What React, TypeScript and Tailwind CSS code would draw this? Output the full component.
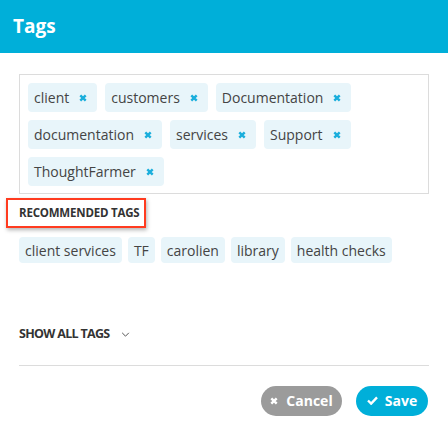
import React from "react";

const font = { fontFamily: '"Open Sans", "Noto Sans", sans-serif' };

function XIcon({ className }: { className?: string }) {
  return (
    <svg viewBox="0 0 8 8" className={className} width="8" height="8">
      <path d="M1.3 1.3 L6.7 6.7 M6.7 1.3 L1.3 6.7" stroke="currentColor" strokeWidth="2.4" strokeLinecap="butt" />
    </svg>
  );
}

function Chip({ label }: { label: string }) {
  return (
    <div className="flex h-[29px] items-center rounded-[4px] bg-[#e8f5fa] pl-[6px] pr-[10px] text-[14px] text-[#444]">
      <span>{label}</span>
      <XIcon className="ml-[10px] text-[#1aaedc]" />
    </div>
  );
}

function RecChip({ label }: { label: string }) {
  return (
    <div className="flex h-[26px] items-center rounded-[4px] bg-[#e8f5fa] px-[6px] text-[14px] text-[#444]">
      {label}
    </div>
  );
}

export default function App() {
  const tags = ["client", "customers", "Documentation", "documentation", "services", "Support", "ThoughtFarmer"];
  const rec = ["client services", "TF", "carolien", "library", "health checks"];
  return (
    <div className="h-[433px] w-[448px] bg-white" style={font}>
      <div className="flex h-[53px] items-center bg-[#00afd9] px-[13px]">
        <span className="text-[19px] font-bold text-white">Tags</span>
      </div>
      <div className="mx-[19px] mt-[21px] flex flex-wrap gap-[8px] border border-[#dcdcdc] px-[8px] pb-[7px] pt-[8px]">
        {tags.map((t) => (
          <Chip key={t} label={t} />
        ))}
      </div>
      <div className="ml-[6px] mt-[4px] flex h-[30px] w-[140px] items-center border-2 border-[#ff3b1f] pl-[11px] shadow-[1px_2px_4px_rgba(0,0,0,0.3)]">
        <span className="text-[11.5px] font-bold uppercase tracking-[-0.2px] text-[#333]">Recommended Tags</span>
      </div>
      <div className="ml-[19px] mt-[9px] flex gap-[6px]">
        {rec.map((t) => (
          <RecChip key={t} label={t} />
        ))}
      </div>
      <div className="ml-[19px] mt-[62px] flex items-center">
        <span className="text-[12.5px] font-bold uppercase tracking-[-0.7px] text-[#333]">Show all tags</span>
        <svg viewBox="0 0 10 6" width="9" height="5" className="ml-[12px] text-[#555]">
          <path d="M1 1 L5 5 L9 1" stroke="currentColor" strokeWidth="1.2" fill="none" />
        </svg>
      </div>
      <div className="mx-[19px] mt-[21px] h-px bg-[#dcdcdc]" />
      <div className="mr-[20px] mt-[20px] flex justify-end gap-[14px]">
        <button className="flex h-[30px] w-[81px] items-center justify-center gap-[8px] rounded-full bg-[#9b9b9b] text-[14px] font-bold text-white">
          <XIcon className="text-white" />
          <span>Cancel</span>
        </button>
        <button className="flex h-[30px] w-[72px] items-center justify-center gap-[7px] rounded-full bg-[#00afd9] text-[14px] font-bold text-white">
          <svg viewBox="0 0 12 10" width="11" height="9">
            <path d="M1 5 L4.5 8.5 L11 1.5" stroke="white" strokeWidth="2.6" fill="none" />
          </svg>
          <span>Save</span>
        </button>
      </div>
    </div>
  );
}
